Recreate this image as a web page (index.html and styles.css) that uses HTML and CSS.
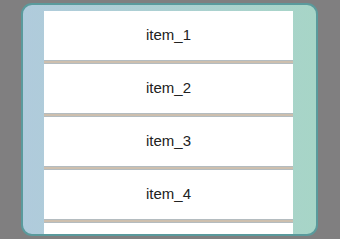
FILE: index.html
```html
<!DOCTYPE html>
<html>
<head>
    <meta charset="UTF-8">
    <title>list</title>
    <link rel="stylesheet" href="styles.css">
</head>
<body>
    <div class="panel">
        <div class="list">
            <div class="item">item_1</div>
            <div class="item">item_2</div>
            <div class="item">item_3</div>
            <div class="item">item_4</div>
            <div class="item">item_5</div>
        </div>
    </div>
</body>
</html>
```

FILE: styles.css
```css
html, body {
    margin: 0;
    height: 100%;
}
body {
    background: #807f80;
    font-family: "Liberation Sans", Arial, sans-serif;
    padding-top: 3px;
    box-sizing: border-box;
}
.panel {
    margin-left: 21px;
    width: 297px;
    height: 233px;
    box-sizing: border-box;
    border: 2px solid #5a9a9c;
    border-radius: 11px;
    background: linear-gradient(to right, #b0cbdc, #a7d5c7);
    padding: 6px 23px 0 21px;
    overflow: hidden;
}
.list {
    background: #cdbfae;
    height: 240px;
}
.item {
    height: 48px;
    line-height: 48px;
    background: #fff;
    border-top: 1px solid #b4bcc0;
    border-bottom: 1px solid #b4bcc0;
    margin-bottom: 2px;
    text-align: center;
    font-size: 15px;
    color: #222;
}
.item:first-child {
    border-top: none;
    height: 49px;
}
.item + .item {
    height: 49px;
}
```
